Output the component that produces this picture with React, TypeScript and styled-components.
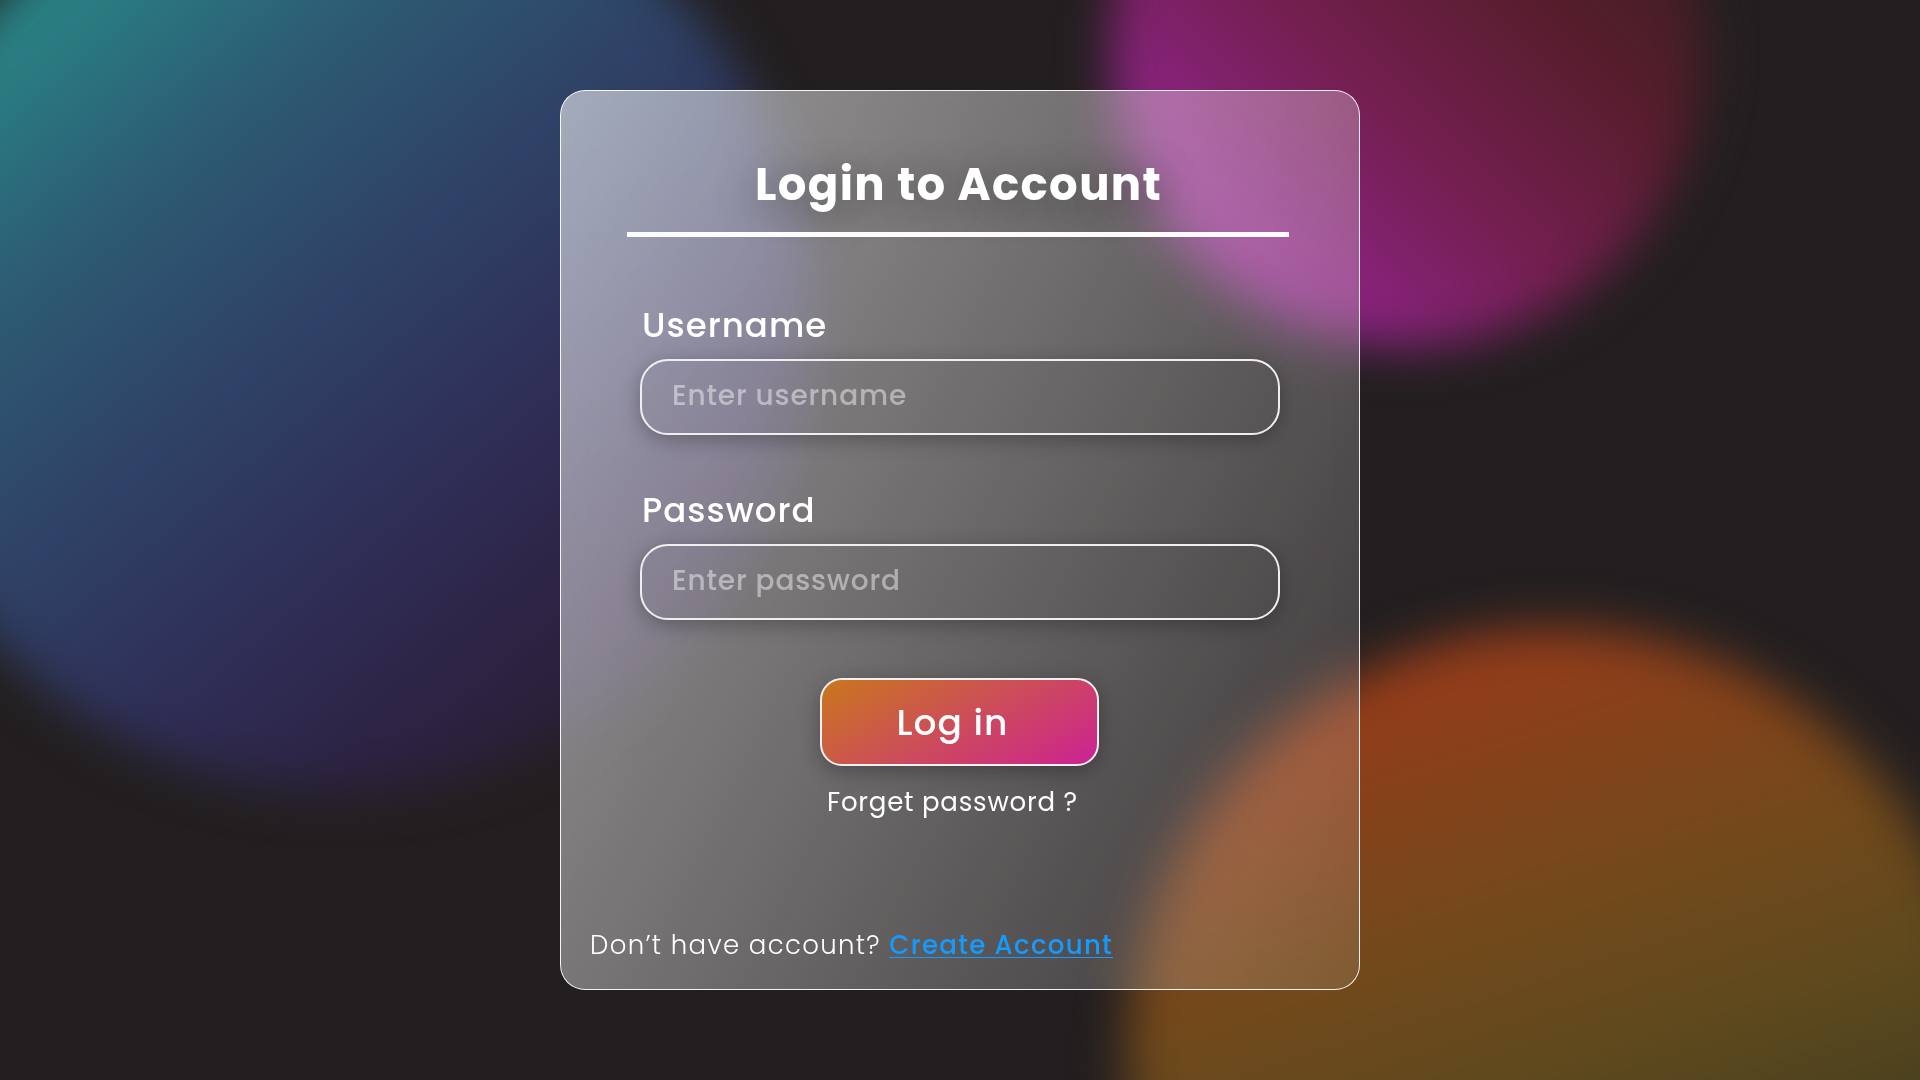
import React from "react";
import styled, { createGlobalStyle } from "styled-components";

const GlobalStyle = createGlobalStyle`
  *, *::before, *::after { box-sizing: border-box; }
  body {
    margin: 0;
    background: #231f20;
    font-family: Poppins, Inter, "Open Sans", sans-serif;
    letter-spacing: 0.03em;
    color: #fff;
  }
`;

const Page = styled.main`
  position: relative;
  width: 100%;
  height: 100vh;
  min-height: 1080px;
  overflow: hidden;
  display: flex;
  align-items: center;
  justify-content: center;
  background: #231f20;
`;

const Orb = styled.div<{ $x: number; $y: number; $r: number; $fill: string }>`
  position: absolute;
  left: ${(p) => p.$x - p.$r}px;
  top: ${(p) => p.$y - p.$r}px;
  width: ${(p) => p.$r * 2}px;
  height: ${(p) => p.$r * 2}px;
  border-radius: 50%;
  background: ${(p) => p.$fill};
  filter: blur(24px);
`;

const Card = styled.form`
  position: relative;
  width: 800px;
  height: 900px;
  padding: 64px 79px 28px;
  display: flex;
  flex-direction: column;
  border: 1px solid rgba(255, 255, 255, 0.92);
  border-radius: 25px;
  background: linear-gradient(117deg, rgba(255, 255, 255, 0.56), rgba(255, 255, 255, 0.1)) border-box;
  backdrop-filter: blur(14px);
`;

const Title = styled.h1`
  margin: 0 0 0 115px;
  font-size: 45px;
  line-height: 60px;
  font-weight: 700;
  letter-spacing: 0.03em;
  white-space: nowrap;
  text-shadow: 0 6px 40px rgba(0, 0, 0, 0.42);
`;

const Rule = styled.div`
  width: 662px;
  height: 5px;
  margin: 17px 0 68px -13px;
  background: #fcfcfc;
`;

const Field = styled.div`
  display: flex;
  flex-direction: column;
  gap: 14px;
  & + & { margin-top: 55px; }
`;

const Label = styled.label`
  padding-left: 2px;
  font-size: 34px;
  line-height: 40px;
  font-weight: 500;
  letter-spacing: 0.03em;
`;

const Input = styled.input`
  width: 640px;
  height: 76px;
  padding: 0 30px 3px;
  border: 2px solid #efefef;
  border-radius: 28px;
  background: transparent;
  outline: none;
  color: #fff;
  font: inherit;
  font-size: 28px;
  font-weight: 500;
  letter-spacing: 0.03em;
  box-shadow: 0 5px 20px rgba(0, 0, 0, 0.28);
  &::placeholder { color: rgba(255, 255, 255, 0.45); opacity: 1; }
`;

const Submit = styled.button`
  width: 279px;
  height: 88px;
  margin: 58px 0 0 180px;
  padding: 0 14px 0 0;
  border: 2px solid #f2f0f0;
  border-radius: 22px;
  background: linear-gradient(150deg, #c9781a, #cc5450 42%, #cd2f80 84%, #ca209a) border-box;
  color: #fff;
  font: inherit;
  font-size: 36px;
  font-weight: 500;
  letter-spacing: 0.03em;
  box-shadow: 0 5px 20px rgba(0, 0, 0, 0.3);
`;

const Forgot = styled.a`
  margin: 20px 0 0 187px;
  align-self: flex-start;
  font-size: 26px;
  line-height: 32px;
  letter-spacing: 0.03em;
  white-space: nowrap;
`;

const Footer = styled.p`
  margin: auto 0 0 -50px;
  font-size: 26px;
  line-height: 32px;
  font-weight: 300;
  letter-spacing: 0.05em;
  white-space: nowrap;
`;

const CreateLink = styled.a`
  color: #159bff;
  font-weight: 500;
  text-decoration: underline;
  text-decoration-thickness: 1px;
  text-underline-offset: 3px;
  text-decoration-skip-ink: none;
`;

export default function App() {
  return (
    <>
      <GlobalStyle />
      <Page>
        <Orb
          $x={340}
          $y={322}
          $r={470}
          $fill="linear-gradient(140deg, #2a8f88 8%, #298083 18%, #2d5a73 33%, #2f4267 48%, #2f2e57 64%, #2d2344 76%, #291e2e 92%)"
        />
        <Orb
          $x={1407}
          $y={50}
          $r={297}
          $fill="linear-gradient(45deg, #92238c 14%, #8b2383 22%, #741f50 43%, #561d2b 66%, #38201f 88%)"
        />
        <Orb
          $x={1555}
          $y={1056}
          $r={428}
          $fill="linear-gradient(162deg, #9a3a1a 8%, #8c3f1a 18%, #73491b 36%, #5f491d 51%, #48401f 65%, #2c3a20 90%)"
        />
        <Card onSubmit={(e: React.FormEvent) => e.preventDefault()}>
          <Title>Login to Account</Title>
          <Rule />
          <Field>
            <Label htmlFor="username">Username</Label>
            <Input id="username" placeholder="Enter username" />
          </Field>
          <Field>
            <Label htmlFor="password">Password</Label>
            <Input id="password" type="password" placeholder="Enter password" />
          </Field>
          <Submit type="submit">Log in</Submit>
          <Forgot>Forget password ?</Forgot>
          <Footer>
            Don’t have account? <CreateLink>Create Account</CreateLink>
          </Footer>
        </Card>
      </Page>
    </>
  );
}
